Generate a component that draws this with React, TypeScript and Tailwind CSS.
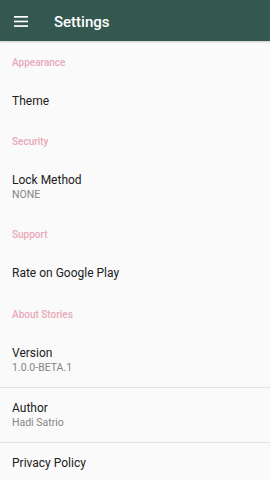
import React from "react";

type Item =
  | { kind: "cat"; label: string; h: string }
  | { kind: "row"; title: string; sub?: string; h: string; divider?: boolean };

const items: Item[] = [
  { kind: "cat", label: "Appearance", h: "h-[40px]" },
  { kind: "row", title: "Theme", h: "h-[39px]" },
  { kind: "cat", label: "Security", h: "h-[40px]" },
  { kind: "row", title: "Lock Method", sub: "NONE", h: "h-[54px]" },
  { kind: "cat", label: "Support", h: "h-[39px]" },
  { kind: "row", title: "Rate on Google Play", h: "h-[40px]" },
  { kind: "cat", label: "About Stories", h: "h-[40px]" },
  { kind: "row", title: "Version", sub: "1.0.0-BETA.1", h: "h-[54px]", divider: true },
  { kind: "row", title: "Author", sub: "Hadi Satrio", h: "h-[54px]", divider: true },
  { kind: "row", title: "Privacy Policy", h: "h-[40px]" },
];

export default function App() {
  return (
    <div
      className="w-[270px] h-[480px] overflow-hidden bg-[#fafafa] flex flex-col"
      style={{ fontFamily: "Roboto, 'Noto Sans', sans-serif" }}
    >
      <div className="h-[41px] shrink-0 bg-[#34574f] flex items-center pt-[2px] shadow-[0_1px_2px_rgba(0,0,0,0.2)] relative z-10">
        <svg width="14" height="11" viewBox="0 0 14 11" className="ml-[14px]">
          <rect x="0" y="0" width="14" height="1.7" fill="#ffffff" />
          <rect x="0" y="4.6" width="14" height="1.7" fill="#ffffff" />
          <rect x="0" y="9.2" width="14" height="1.7" fill="#ffffff" />
        </svg>
        <span className="ml-[26px] mt-[2px] text-[15px] font-medium text-white leading-none">Settings</span>
      </div>
      <div className="flex flex-col">
        {items.map((it, i) =>
          it.kind === "cat" ? (
            <div key={i} className={`${it.h} shrink-0 flex items-center pt-[3px] px-[12px]`}>
              <span className="text-[10px] font-medium text-[#e8a9b9] leading-none">{it.label}</span>
            </div>
          ) : (
            <React.Fragment key={i}>
              <div className={`${it.h} shrink-0 flex flex-col justify-center px-[12px]`}>
                <span className="text-[12px] text-[#212121] leading-[16px]">{it.title}</span>
                {it.sub && (
                  <span className="text-[10.5px] text-[#858585] leading-[14px]">{it.sub}</span>
                )}
              </div>
              {it.divider && <div className="h-px shrink-0 bg-[#e2e2e2]" />}
            </React.Fragment>
          )
        )}
      </div>
    </div>
  );
}
